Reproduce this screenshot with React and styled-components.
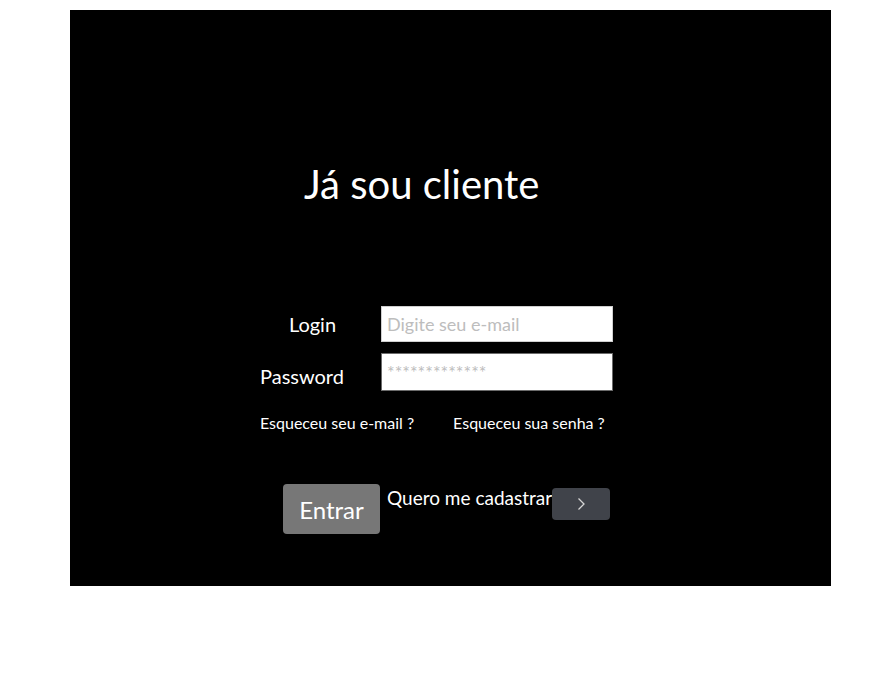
import React from 'react';
import styled, { createGlobalStyle } from 'styled-components';

const GlobalStyle = createGlobalStyle`
  body {
    margin: 0;
    background: #fff;
    font-family: "Source Sans Pro", Lato, "Liberation Sans", sans-serif;
  }
`;

const Page = styled.div`
  padding: 10px 50px 0 70px;
`;

const Panel = styled.section`
  background: #000;
  height: 576px;
  display: flex;
  flex-direction: column;
  color: #fff;
`;

const Title = styled.h1`
  margin: 150px 0 0 234px;
  font-size: 40px;
  font-weight: 400;
  line-height: 48px;
`;

const Form = styled.form`
  margin: 98px 0 0 190px;
  width: 360px;
`;

const Row = styled.div`
  display: grid;
  grid-template-columns: 121px 232px;
  align-items: center;
  margin-bottom: ${(p) => p.gap || 0}px;
`;

const Label = styled.label`
  font-size: 20px;
  text-align: center;
  padding-right: ${(p) => p.shift || 0}px;
  padding-top: ${(p) => p.drop || 0}px;
`;

const Input = styled.input`
  box-sizing: border-box;
  width: 232px;
  height: ${(p) => p.h}px;
  border: 1px solid ${(p) => p.border};
  background: #fff;
  font-family: inherit;
  font-size: 18px;
  padding: 0 5px;
  &::placeholder {
    color: #bdbdbd;
  }
`;

const Links = styled.div`
  display: flex;
  gap: 39px;
  margin: 22px 0 0 0;
`;

const LinkText = styled.a`
  color: #fff;
  font-size: 16px;
  text-decoration: none;
  cursor: pointer;
`;

const Actions = styled.div`
  display: flex;
  align-items: flex-start;
  margin: 52px 0 0 23px;
`;

const EnterButton = styled.button`
  width: 97px;
  height: 50px;
  background: #777;
  border: none;
  border-radius: 4px;
  color: #fff;
  font-family: inherit;
  font-size: 24px;
  margin-right: 7px;
`;

const Signup = styled.span`
  font-size: 19px;
  line-height: 28px;
`;

const ArrowButton = styled.button`
  width: 58px;
  height: 32px;
  margin-top: 4px;
  background: #40434a;
  border: none;
  border-radius: 4px;
  display: flex;
  align-items: center;
  justify-content: center;
  padding: 0;
`;

export default function App() {
  return (
    <>
      <GlobalStyle />
      <Page>
        <Panel>
          <Title>Já sou cliente</Title>
          <Form>
            <Row gap={11}>
              <Label shift={16} drop={-2}>Login</Label>
              <Input h={36} border="#cfcfcf" placeholder="Digite seu e-mail" />
            </Row>
            <Row>
              <Label shift={40} drop={8}>Password</Label>
              <Input h={38} border="#6b6b6b" type="password" placeholder="*************" />
            </Row>
            <Links>
              <LinkText>Esqueceu seu e-mail ?</LinkText>
              <LinkText>Esqueceu sua senha ?</LinkText>
            </Links>
            <Actions>
              <EnterButton type="button">Entrar</EnterButton>
              <Signup>Quero me cadastrar</Signup>
              <ArrowButton type="button">
                <svg width="10" height="14" viewBox="0 0 10 14">
                  <path d="M2.5 1.5 L8 7 L2.5 12.5" fill="none" stroke="#d6d6d6" strokeWidth="1.3" />
                </svg>
              </ArrowButton>
            </Actions>
          </Form>
        </Panel>
      </Page>
    </>
  );
}
